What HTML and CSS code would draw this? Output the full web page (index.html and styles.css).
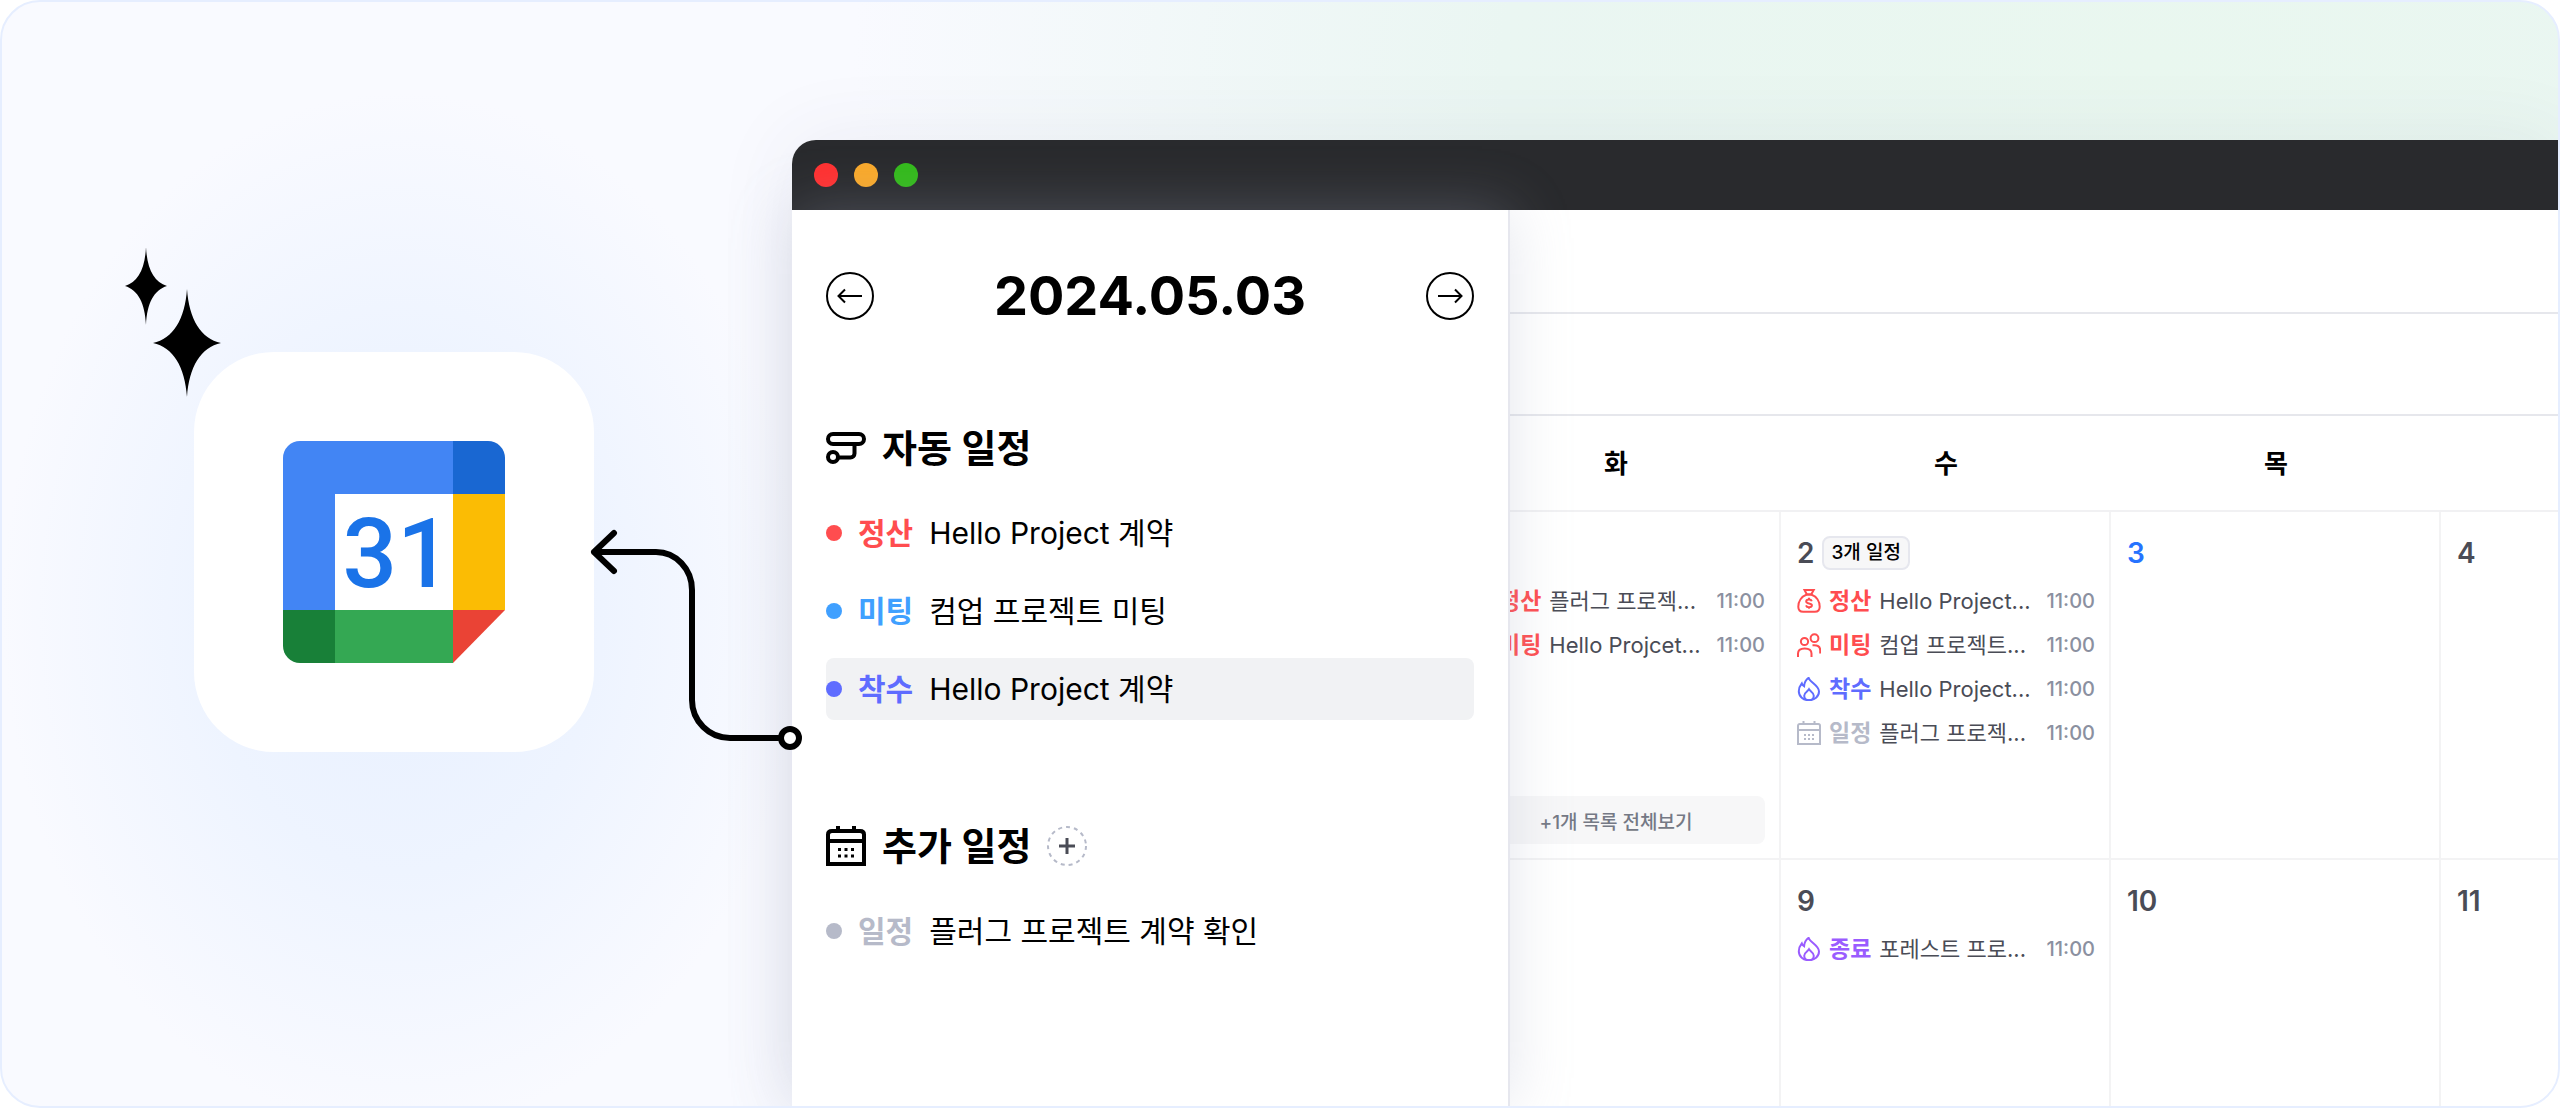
FILE: index.html
```html
<!DOCTYPE html>
<html lang="ko">
<head>
<meta charset="utf-8">
<meta name="viewport" content="width=device-width, initial-scale=1">
<title>캘린더 연동</title>
<link rel="stylesheet" href="styles.css">
</head>
<body>
<svg class="sprite" aria-hidden="true">
  <symbol id="i-money" viewBox="0 0 24 24">
    <path d="M7.500 1h9.200l-2.500 4.500H9.900z"/>
    <path d="M9.800 5.500C4.500 7.500 1.300 12.500 1.300 17.800c0 3.200 1.700 5 4.900 5h11.600c3.200 0 4.900-1.800 4.900-5 0-5.300-3.200-10.300-8.500-12.300z"/>
    <path d="M12 8.800v1.700M12 18v1.700M14.800 12.300c-.4-1.200-1.400-1.800-2.800-1.800-1.700 0-2.800.8-2.800 2s1 1.600 2.800 1.900 2.900.7 2.900 1.900-1.200 2-2.900 2c-1.500 0-2.600-.7-3-1.900"/>
  </symbol>
  <symbol id="i-people" viewBox="0 0 24 24">
    <circle cx="7.500" cy="8.500" r="3.600"/>
    <circle cx="17.500" cy="5.200" r="3.900"/>
    <path d="M1 24v-3.500C1 17.500 3.500 15.500 7.700 15.500s6.800 2 6.800 5V24"/>
    <path d="M15.500 12.300h1.500c3.800 0 6.200 2 6.200 5V20.500"/>
  </symbol>
  <symbol id="i-fire" viewBox="0 0 24 24">
    <path d="M11.600.8C13 5.500 22 8.500 22 14.500c0 5-4.500 8.700-10.100 8.700S1.800 19.500 1.800 14.300c0-3.300 1.200-5.800 3-8 .5 1.300 1.200 2.200 2.300 2.900C7.400 5.500 8.800 2.800 11.600.8z"/>
    <path d="M12 12.300c1.300 2.200 4.800 3.400 4.800 6.400 0 2.600-2 4.500-4.800 4.500s-4.800-1.900-4.800-4.500c0-3 3.500-4.200 4.800-6.400z"/>
  </symbol>
  <symbol id="i-calendar" viewBox="0 0 24 24">
    <path d="M1 23V4.800C1 3.700 1.700 3 2.800 3h18.400C22.300 3 23 3.700 23 4.800V23zM1 9h22M6.500 0v3M17.500 0v3"/>
    <path class="dots" d="M7 13h2v2H7zM11 13h2v2h-2zM15 13h2v2h-2zM7 17h2v2H7zM11 17h2v2h-2zM15 17h2v2h-2z"/>
  </symbol>
</svg>

<main class="page">
  <section class="source">
    <svg class="sparkles" viewBox="0 0 96 150" aria-hidden="true">
      <path d="M20 0c1 22 8 35 21 39-13 4-20 17-21 39-1-22-8-35-21-39C12 35 19 22 20 0z"/>
      <path d="M61 42c2 30 14 50 34 54-20 4-32 24-34 54-2-30-14-50-34-54 20-4 32-24 34-54z"/>
    </svg>
    <div class="app-tile">
      <svg class="app-logo" viewBox="0 0 222 222" role="img" aria-label="31">
        <path fill="#4285f4" d="M17 0h153v53H52v116H0V17A17 17 0 0 1 17 0z"/>
        <path fill="#1967d2" d="M170 0h35a17 17 0 0 1 17 17v36h-52z"/>
        <path fill="#fbbc04" d="M170 53h52v116h-52z"/>
        <path fill="#ea4335" d="M170 169h52l-52 53z"/>
        <path fill="#34a853" d="M52 169h118v53H52z"/>
        <path fill="#188038" d="M0 169h52v53H17a17 17 0 0 1-17-17z"/>
        <text class="logo-day" x="114" y="146" text-anchor="middle">31</text>
      </svg>
    </div>
    <svg class="connector" viewBox="0 0 216 232" aria-hidden="true">
      <path d="M6 24H68a36 38 0 0 1 36 38V172a38 38 0 0 0 38 38H190M26 5L6 24l20 19"/>
      <circle cx="202" cy="210" r="9"/>
    </svg>
  </section>

  <section class="window">
    <header class="titlebar">
      <span class="light light-red"></span>
      <span class="light light-amber"></span>
      <span class="light light-green"></span>
    </header>
    <div class="content">
      <aside class="panel">
        <div class="date-nav">
          <button class="round" type="button" aria-label="이전 날짜"><svg viewBox="0 0 48 48"><path d="M36 24H13M19 17.500L12.500 24l6.500 6.500"/></svg></button>
          <h1 class="date">2024.05.03</h1>
          <button class="round" type="button" aria-label="다음 날짜"><svg viewBox="0 0 48 48"><path d="M12 24h23M29 17.500l6.500 6.500-6.500 6.500"/></svg></button>
        </div>

        <section class="group">
          <div class="group-head">
            <svg class="group-icon" viewBox="0 0 40 40" aria-hidden="true">
              <rect x="2" y="6" width="36" height="10" rx="5"/>
              <path d="M28.500 16v9.500a4 4 0 0 1-4 4H12"/>
              <circle cx="7" cy="29" r="5"/>
            </svg>
            <h2 class="group-title">자동 일정</h2>
          </div>
          <ul class="list">
            <li class="item red"><span class="dot"></span><b class="tag">정산</b><span>Hello Project 계약</span></li>
            <li class="item sky"><span class="dot"></span><b class="tag">미팅</b><span>컴업 프로젝트 미팅</span></li>
            <li class="item indigo selected"><span class="dot"></span><b class="tag">착수</b><span>Hello Project 계약</span></li>
          </ul>
        </section>

        <section class="group">
          <div class="group-head">
            <svg class="group-icon" viewBox="0 0 40 40" aria-hidden="true">
              <path d="M2 38V8.500C2 6 3.500 5 6 5h28c2.500 0 4 1 4 3.500V38zM2 15h36M12 0v5M28 0v5"/>
              <path class="dots" d="M12 22h3v3h-3zM18.500 22h3v3h-3zM25 22h3v3h-3zM12 28.500h3v3h-3zM18.500 28.500h3v3h-3zM25 28.500h3v3h-3z"/>
            </svg>
            <h2 class="group-title">추가 일정</h2>
            <button class="add" type="button" aria-label="일정 추가"><svg viewBox="0 0 40 40"><circle cx="20" cy="20" r="19"/><path d="M20 12v16M12 20h16"/></svg></button>
          </div>
          <ul class="list">
            <li class="item gray"><span class="dot"></span><b class="tag">일정</b><span>플러그 프로젝트 계약 확인</span></li>
          </ul>
        </section>
      </aside>

      <div class="calendar">
        <div class="toolbar"></div>
        <div class="toolbar toolbar-sub"></div>
        <table class="month">
          <thead>
            <tr><th scope="col">화</th><th scope="col">수</th><th scope="col">목</th><td></td></tr>
          </thead>
          <tbody>
            <tr class="week">
              <td>
                <div class="cell">
                  <div class="day"></div>
                  <ul class="events">
                    <li class="event red"><svg><use href="#i-money"/></svg><b>정산</b><span class="name">플러그 프로젝...</span><time>11:00</time></li>
                    <li class="event red"><svg><use href="#i-people"/></svg><b>미팅</b><span class="name">Hello Projcet...</span><time>11:00</time></li>
                  </ul>
                  <button class="more" type="button">+1개 목록 전체보기</button>
                </div>
              </td>
              <td>
                <div class="cell">
                  <div class="day">2 <span class="count">3개 일정</span></div>
                  <ul class="events">
                    <li class="event red"><svg><use href="#i-money"/></svg><b>정산</b><span class="name">Hello Project...</span><time>11:00</time></li>
                    <li class="event red"><svg><use href="#i-people"/></svg><b>미팅</b><span class="name">컴업 프로젝트...</span><time>11:00</time></li>
                    <li class="event indigo"><svg><use href="#i-fire"/></svg><b>착수</b><span class="name">Hello Project...</span><time>11:00</time></li>
                    <li class="event gray"><svg><use href="#i-calendar"/></svg><b>일정</b><span class="name">플러그 프로젝...</span><time>11:00</time></li>
                  </ul>
                </div>
              </td>
              <td><div class="cell"><div class="day today">3</div></div></td>
              <td><div class="cell"><div class="day">4</div></div></td>
            </tr>
            <tr class="week">
              <td></td>
              <td>
                <div class="cell">
                  <div class="day">9</div>
                  <ul class="events">
                    <li class="event violet"><svg><use href="#i-fire"/></svg><b>종료</b><span class="name">포레스트 프로...</span><time>11:00</time></li>
                  </ul>
                </div>
              </td>
              <td><div class="cell"><div class="day">10</div></div></td>
              <td><div class="cell"><div class="day">11</div></div></td>
            </tr>
          </tbody>
        </table>
      </div>
    </div>
  </section>
</main>
</body>
</html>
```
FILE: styles.css
```css
* { box-sizing: border-box; }

body {
  margin: 0;
  background: #fff;
  color: #000;
  font-family: Inter, "Noto Sans CJK KR", sans-serif;
}

h1, h2, ul { margin: 0; padding: 0; }
ul { list-style: none; }
button { padding: 0; border: 0; background: none; font: inherit; color: inherit; }

.sprite { position: absolute; width: 0; height: 0; }

.page {
  display: flex;
  min-height: 100vh;
  overflow: hidden;
  border: 2px solid #e6eeff;
  border-radius: 40px;
  background:
    radial-gradient(ellipse 400px 520px at 400px 610px, #e8f0ff 0%, #eef4ff 50%, rgba(249, 250, 255, 0) 100%),
    radial-gradient(ellipse 1300px 700px at 2150px 60px, #e9f7ef 0%, #eaf6f2 50%, rgba(249, 250, 255, 0) 100%),
    #f9faff;
}

/* Connected service */
.source {
  position: relative;
  z-index: 2;
  flex: 0 0 790px;
  padding: 350px 0 0 192px;
}

.app-tile {
  display: flex;
  align-items: center;
  justify-content: center;
  width: 400px;
  height: 400px;
  border-radius: 80px;
  background: #fff;
}

.app-logo { width: 222px; height: 222px; }
.logo-day { font: 500 96px Roboto, sans-serif; fill: #1a73e8; }

.sparkles {
  position: absolute;
  left: 124px;
  top: 245px;
  width: 96px;
  height: 150px;
  overflow: visible;
}

.connector {
  position: absolute;
  left: 586px;
  top: 526px;
  width: 216px;
  height: 232px;
  fill: none;
  stroke: #000;
  stroke-width: 6;
  stroke-linecap: round;
  stroke-linejoin: round;
}
.connector circle { fill: #fff; }

/* Browser window */
.window {
  display: flex;
  flex: 1;
  flex-direction: column;
  min-width: 0;
  margin-top: 138px;
  border-radius: 24px 0 0 0;
  background: #fff;
  box-shadow: 0 0 80px rgba(60, 70, 100, 0.08);
}

.titlebar {
  display: flex;
  align-items: center;
  gap: 16px;
  height: 70px;
  padding: 0 22px;
  border-radius: 24px 0 0 0;
  background: #292a2d;
}

.light { width: 24px; height: 24px; border-radius: 50%; }
.light-red { background: #ff3131; }
.light-amber { background: #f9a92b; }
.light-green { background: #33ba1b; }

.content { display: flex; flex: 1; }

/* Day panel */
.panel {
  position: relative;
  z-index: 1;
  flex: 0 0 718px;
  padding: 60px 34px;
  border-right: 2px solid #e6e7ee;
  background: #fff;
  box-shadow: 0 0 56px rgba(166, 172, 194, 0.3);
}

.date-nav { display: flex; align-items: center; justify-content: space-between; height: 52px; }
.date { font-size: 54px; line-height: 52px; font-weight: 700; }

.round, .round svg { display: block; width: 48px; height: 48px; }
.round { border: 2px solid #000; border-radius: 50%; }
.round svg { margin: -2px; fill: none; stroke: #000; stroke-width: 2; }

.group { padding-top: 102px; }
.group-head { display: flex; align-items: center; gap: 16px; height: 48px; }
.group-icon { width: 40px; height: 40px; fill: none; stroke: #000; stroke-width: 4; overflow: visible; }
.group-icon .dots, #i-calendar .dots { fill: currentColor; stroke: none; }
.group-title { font-size: 38px; line-height: 48px; font-weight: 600; }

.add, .add svg { display: block; width: 40px; height: 40px; }
.add svg { fill: none; }
.add circle { stroke: #b6bac9; stroke-width: 2; stroke-dasharray: 4 4; }
.add path { stroke: #4a4c56; stroke-width: 3; }

.list { display: flex; flex-direction: column; gap: 16px; padding-top: 30px; }
.item { display: flex; align-items: center; gap: 16px; height: 62px; font-size: 30px; line-height: 40px; }
.selected { border-radius: 8px; background: #f1f2f4; }
.dot { width: 16px; height: 16px; border-radius: 50%; background: var(--tone); }
.tag { font-weight: 600; color: var(--tone); }

.red { --tone: #ff4d4f; }
.sky { --tone: #40a0ff; }
.indigo { --tone: #5f6cff; }
.gray { --tone: #b6bac9; }
.violet { --tone: #9a5cff; }

/* Month calendar */
.calendar { flex: 1; min-width: 0; margin-left: -59px; overflow: hidden; }
.toolbar { height: 104px; border-bottom: 2px solid #e6e7ec; }
.toolbar-sub { height: 102px; }

.month { width: 1320px; table-layout: fixed; border-collapse: separate; border-spacing: 0; }
.month th, .month td { padding: 0; vertical-align: top; }
.month thead th, .month thead td { height: 96px; border-bottom: 2px solid #f1f1f3; }
.month thead th { padding-top: 2px; vertical-align: middle; font-size: 26px; line-height: 36px; font-weight: 600; }
.week td { height: 348px; border-right: 2px solid #f3f3f4; border-bottom: 2px solid #f3f3f4; }
.week:last-child td { height: 246px; border-bottom: 0; }

.cell { display: flex; flex-direction: column; height: 100%; padding: 23px 14px 14px 16px; }
.day { display: flex; align-items: center; gap: 8px; height: 36px; font-size: 28px; line-height: 36px; font-weight: 600; color: #4a4c56; }
.today { color: #2673ff; }
.count {
  height: 34px;
  padding: 0 7px;
  border: 2px solid #e6e7ee;
  border-radius: 8px;
  background: #f7f7f8;
  color: #000;
  font-size: 19px;
  line-height: 30px;
  font-weight: 500;
}

.events { display: flex; flex-direction: column; gap: 16px; padding-top: 16px; }
.event { display: flex; align-items: center; gap: 8px; height: 28px; font-size: 23px; line-height: 28px; white-space: nowrap; }
.event svg { flex: none; width: 24px; height: 24px; fill: none; stroke: var(--tone); stroke-width: 2; color: var(--tone); overflow: visible; }
.event b { font-weight: 600; color: var(--tone); }
.name { flex: 1; min-width: 0; font-size: 22px; color: #4a4c56; }
.event time { font-size: 20px; font-weight: 500; color: #8b90a0; }

.more {
  width: 100%;
  height: 48px;
  margin-top: auto;
  border-radius: 8px;
  background: #f7f7f8;
  color: #757985;
  font-size: 19px;
  font-weight: 500;
}
```
